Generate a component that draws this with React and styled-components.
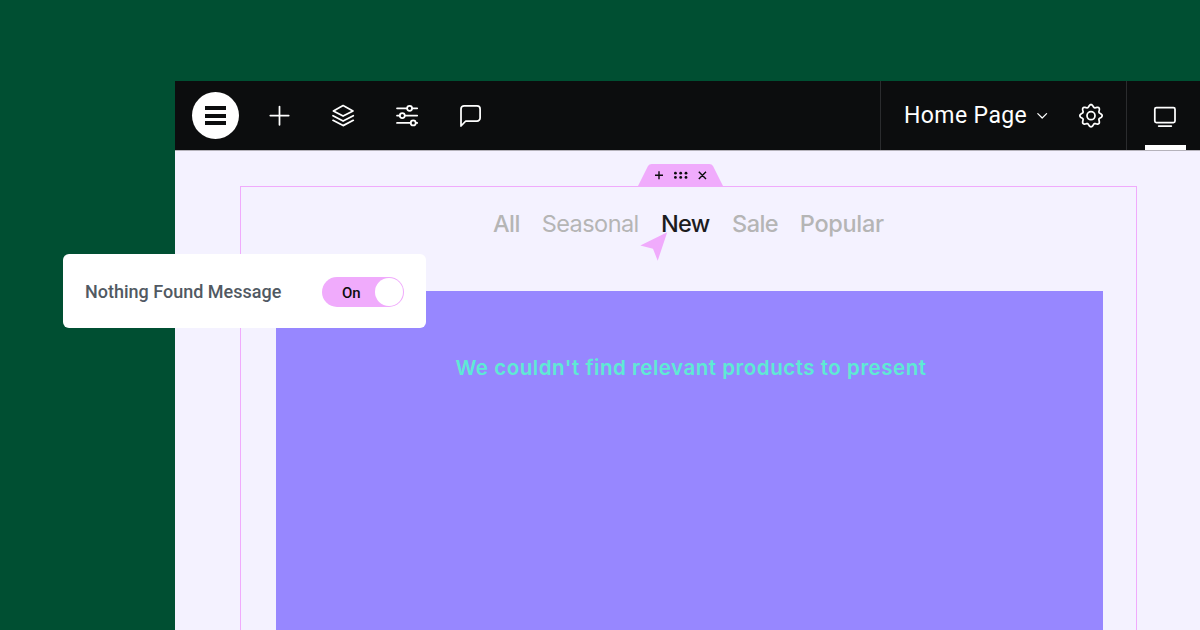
import React from "react";
import styled, { createGlobalStyle } from "styled-components";

const COLORS = {
  green: "#004f32",
  black: "#0c0d0e",
  white: "#ffffff",
  canvas: "#f4f2ff",
  pink: "#f0abfc",
  purple: "#9787ff",
  mint: "#5eead4",
  gray400: "#b5b5b5",
  gray600: "#515962",
};

const TABS = [
  { label: "All", weight: 500, width: 26, spacing: -0.6 },
  { label: "Seasonal", weight: 400, width: 96.5, spacing: -0.55 },
  { label: "New", weight: 500, width: 48.5, spacing: -0.6, active: true },
  { label: "Sale", weight: 500, width: 45, spacing: -0.55 },
  { label: "Popular", weight: 500, width: 84, spacing: -0.3 },
];

// eight-toothed cog outline around a 26px box
const gearPath = () => {
  const points = [];
  for (let i = 0; i < 144; i++) {
    const angle = (i / 144) * Math.PI * 2;
    const radius = 9.9 + 1.25 * Math.cos(angle * 8);
    const x = 13 + radius * Math.cos(angle);
    const y = 12.7 + radius * Math.sin(angle);
    points.push(x.toFixed(2) + " " + y.toFixed(2));
  }
  return "M" + points.join("L") + "Z";
};

const App = () => {
  return (
    <Page>
      <GlobalStyle />
      <Editor>
        <Toolbar>
          <Tools>
            <Logo>
              <LogoBar />
              <LogoBar />
              <LogoBar />
            </Logo>
            <ToolIcon viewBox="0 0 24 24">
              <path d="M12.5 2.6v18.2M3.3 11.6h18.4" />
            </ToolIcon>
            <ToolIcon viewBox="0 0 24 24">
              <path d="M12.1 1.6 22 6.9l-9.9 5.2-9.7-5.2Z" />
              <path d="m2 11.7 10.1 5.3L22.3 11.7" />
              <path d="m2 16.3 10.1 5.3 10.2-5.3" />
            </ToolIcon>
            <ToolIcon viewBox="0 0 24 24">
              <path d="M2 4.3h10.1M17.1 4.3h5.1M2 11.6h2.7M9.9 11.6h12.3M2 18.9h13.7M20.8 18.9h1.4" />
              <circle cx="14.6" cy="4.3" r="2.5" />
              <circle cx="7.3" cy="11.6" r="2.5" />
              <circle cx="18.2" cy="18.9" r="2.5" />
            </ToolIcon>
            <ToolIcon viewBox="0 0 24 24">
              <path d="M2 22V4.9a3.1 3.1 0 0 1 3.1-3.1h12.9a3.1 3.1 0 0 1 3.1 3.1v9a3.1 3.1 0 0 1-3.1 3.1H6.8Z" />
            </ToolIcon>
          </Tools>
          <PageControls>
            <PageName>Home Page</PageName>
            <Chevron viewBox="0 0 12 8">
              <path d="m1.8 1.6 4.4 4.4 4.4-4.4" />
            </Chevron>
            <Gear viewBox="0 0 26 26">
              <path d={gearPath()} />
              <circle cx="13" cy="12.7" r="4" />
            </Gear>
          </PageControls>
          <Device>
            <Monitor viewBox="0 0 24 24">
              <rect x="2.8" y="3.6" width="20.2" height="14.9" rx="1.6" />
              <path d="M6.7 22h12.6" />
            </Monitor>
            <DeviceMarker />
          </Device>
        </Toolbar>
        <Canvas>
          <Handle viewBox="0 0 85 22">
            <path
              d="M0 22 10 2.1Q11.2 0 13.6 0H71.4Q73.8 0 75 2.1L85 22Z"
              fill={COLORS.pink}
            />
            <path
              d="M17 11.3h8M21 7.3v8M60.8 7.7l7.2 7.2M68 7.7l-7.2 7.2"
              stroke={COLORS.black}
              strokeWidth="1.4"
            />
            {[37.4, 42.7, 48].map((x) => (
              <React.Fragment key={x}>
                <circle cx={x} cy="9.2" r="1.4" fill={COLORS.black} />
                <circle cx={x} cy="13.4" r="1.4" fill={COLORS.black} />
              </React.Fragment>
            ))}
          </Handle>
          <Section>
            <TabList>
              {TABS.map((tab) => (
                <Tab
                  key={tab.label}
                  $active={tab.active}
                  $weight={tab.weight}
                  $width={tab.width}
                  $spacing={tab.spacing}
                >
                  {tab.label}
                </Tab>
              ))}
            </TabList>
            <Results>
              <Message>We couldn't find relevant products to present</Message>
            </Results>
          </Section>
        </Canvas>
      </Editor>
      <Cursor viewBox="0 0 28 30">
        <path d="M27.2 .2.3 13.4 13 16.8l4.7 12Z" />
      </Cursor>
      <SettingCard>
        <SettingLabel>Nothing Found Message</SettingLabel>
        <Toggle>
          <ToggleLabel>On</ToggleLabel>
          <Knob />
        </Toggle>
      </SettingCard>
    </Page>
  );
};

const GlobalStyle = createGlobalStyle`
  *, *::before, *::after {
    box-sizing: border-box;
  }

  body {
    margin: 0;
  }
`;

const Page = styled.div`
  position: relative;
  display: flex;
  width: 1200px;
  height: 630px;
  padding: 81px 0 0 175px;
  overflow: hidden;
  background: ${COLORS.green};
`;

const Editor = styled.main`
  display: flex;
  flex-direction: column;
  flex: 1;
  background: ${COLORS.canvas};
`;

const Toolbar = styled.header`
  display: flex;
  height: 70px;
  flex-shrink: 0;
  border-bottom: 1px solid #b5b3bb;
  background: ${COLORS.black};
`;

const Tools = styled.div`
  display: flex;
  align-items: center;
  flex: 1;
  gap: 40px;
  padding-left: 17px;
`;

const Logo = styled.div`
  display: flex;
  flex-direction: column;
  align-items: center;
  justify-content: center;
  gap: 3.7px;
  width: 47px;
  height: 47px;
  margin-right: -12px;
  border-radius: 50%;
  background: ${COLORS.white};
`;

const LogoBar = styled.span`
  width: 20.5px;
  height: 4px;
  background: ${COLORS.black};
`;

const Icon = styled.svg`
  flex-shrink: 0;
  fill: none;
  stroke: ${COLORS.white};
  stroke-width: 1.75;
  stroke-linecap: round;
  stroke-linejoin: round;
`;

const ToolIcon = styled(Icon)`
  width: 24px;
  height: 24px;
`;

const PageControls = styled.div`
  display: flex;
  align-items: center;
  width: 246px;
  padding-left: 23px;
  border-left: 1px solid #2b2c2e;
`;

const PageName = styled.span`
  width: 132px;
  padding-bottom: 1px;
  font-family: Roboto, sans-serif;
  font-size: 23px;
  letter-spacing: 0.4px;
  white-space: nowrap;
  color: ${COLORS.white};
`;

const Chevron = styled(Icon)`
  width: 12px;
  height: 8px;
  stroke-width: 1.2;
`;

const Gear = styled(Icon)`
  width: 26px;
  height: 26px;
  margin-left: 30px;
`;

const Device = styled.div`
  display: flex;
  flex-direction: column;
  justify-content: space-between;
  width: 74px;
  padding: 23px 0 0 18px;
  border-left: 1px solid #2b2c2e;
`;

const Monitor = styled(Icon)`
  width: 24px;
  height: 24px;
  margin-left: 7px;
`;

const DeviceMarker = styled.span`
  width: 41px;
  height: 5px;
  background: ${COLORS.white};
`;

const Canvas = styled.div`
  display: flex;
  flex-direction: column;
  align-items: center;
  flex: 1;
  padding: 13px 63px 0 65px;
`;

const Handle = styled.svg`
  width: 85px;
  height: 22px;
  flex-shrink: 0;
  margin-right: 16px;
`;

const Section = styled.section`
  display: flex;
  flex-direction: column;
  flex: 1;
  align-self: stretch;
  padding: 0 33px 0 35px;
  border: 1px solid ${COLORS.pink};
  border-bottom: none;
`;

const TabList = styled.nav`
  display: flex;
  gap: 22.7px;
  height: 104px;
  padding: 22px 0 0 217px;
`;

const Tab = styled.span`
  width: ${(p) => p.$width}px;
  font-family: Inter, sans-serif;
  font-size: 23.5px;
  line-height: 30px;
  font-weight: ${(p) => p.$weight};
  letter-spacing: ${(p) => p.$spacing}px;
  white-space: nowrap;
  color: ${(p) => (p.$active ? "#1c1c1e" : COLORS.gray400)};
`;

const Results = styled.div`
  flex: 1;
  padding-top: 62px;
  padding-left: 3px;
  background: ${COLORS.purple};
  text-align: center;
`;

const Message = styled.p`
  margin: 0;
  font-family: Inter, sans-serif;
  font-size: 20.5px;
  line-height: 30px;
  font-weight: 600;
  letter-spacing: 0.53px;
  white-space: nowrap;
  color: ${COLORS.mint};
`;

const Cursor = styled.svg`
  position: absolute;
  left: 640px;
  top: 232px;
  width: 28px;
  height: 30px;
  fill: ${COLORS.pink};
`;

const SettingCard = styled.div`
  position: absolute;
  left: 63px;
  top: 254px;
  display: flex;
  align-items: center;
  justify-content: space-between;
  width: 363px;
  height: 74px;
  padding: 2px 22px 0 22px;
  border-radius: 6px;
  background: ${COLORS.white};
`;

const SettingLabel = styled.span`
  padding-bottom: 1px;
  font-family: Roboto, sans-serif;
  font-size: 18px;
  font-weight: 500;
  color: ${COLORS.gray600};
`;

const Toggle = styled.div`
  display: flex;
  align-items: center;
  justify-content: space-between;
  width: 82px;
  height: 30px;
  padding: 0 1px 0 20px;
  border-radius: 16px;
  background: ${COLORS.pink};
`;

const ToggleLabel = styled.span`
  padding-top: 1px;
  font-family: Roboto, sans-serif;
  font-size: 15px;
  font-weight: 500;
  color: ${COLORS.black};
`;

const Knob = styled.span`
  width: 28px;
  height: 28px;
  border-radius: 50%;
  background: ${COLORS.white};
`;

export default App;
